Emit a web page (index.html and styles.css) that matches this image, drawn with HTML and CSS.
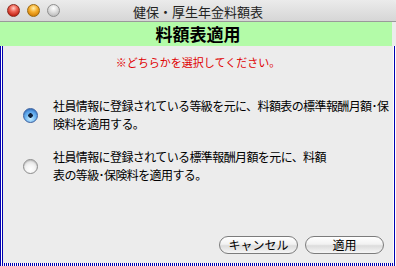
FILE: index.html
```html
<!DOCTYPE html>
<html lang="ja">
<head>
<meta charset="utf-8">
<link rel="stylesheet" href="styles.css">
</head>
<body>
<div class="window">
  <div class="titlebar">
    <div class="lights">
      <span class="light red"></span>
      <span class="light yellow"></span>
      <span class="light gray"></span>
    </div>
    <div class="title">健保・厚生年金料額表</div>
  </div>
  <div class="header">料額表適用</div>
  <div class="panel">
    <div class="inner">
      <div class="notice">※どちらかを選択してください。</div>
      <div class="options">
        <div class="option">
          <span class="radio on"></span>
          <div class="label">社員情報に登録されている等級を元に、料額表の標準報酬月額･保<br>険料を適用する。</div>
        </div>
        <div class="option">
          <span class="radio"></span>
          <div class="label">社員情報に登録されている標準報酬月額を元に、料額<br>表の等級･保険料を適用する。</div>
        </div>
      </div>
      <div class="buttons">
        <button class="btn">キャンセル</button>
        <button class="btn">適用</button>
      </div>
    </div>
  </div>
</div>
</body>
</html>
```
FILE: styles.css
```css
* { box-sizing: border-box; }
html, body {
  margin: 0;
  padding: 0;
  width: 396px;
  height: 266px;
  overflow: hidden;
  background: #ececec;
  font-family: "Noto Sans CJK JP", "Noto Sans", sans-serif;
}
.window {
  width: 396px;
  height: 266px;
  display: flex;
  flex-direction: column;
}
.titlebar {
  height: 22px;
  background: linear-gradient(#ebebeb, #d6d6d6);
  border-bottom: 1px solid #9a9a9a;
  border-radius: 5px 5px 0 0;
  display: flex;
  align-items: center;
}
.lights {
  display: flex;
  gap: 7px;
  padding-left: 7px;
}
.light {
  width: 13px;
  height: 13px;
  border-radius: 50%;
  display: block;
}
.light.red {
  background: radial-gradient(circle at 50% 30%, #ffd0c8 0, #f0685a 35%, #c01e10 80%);
  border: 1px solid #8a2a20;
}
.light.yellow {
  background: radial-gradient(circle at 50% 30%, #fff0b0 0, #f6b030 40%, #d07a00 85%);
  border: 1px solid #9a6a10;
}
.light.gray {
  background: radial-gradient(circle at 50% 30%, #ffffff 0, #dcdcdc 45%, #b4b4b4 90%);
  border: 1px solid #8e8e8e;
}
.title {
  flex: 1;
  text-align: center;
  font-size: 13px;
  color: #222;
  margin-left: -60px;
  padding-top: 1px;
}
.header {
  height: 24px;
  background: #b3fba8;
  margin-right: 4px;
  text-align: center;
  font-size: 17px;
  font-weight: bold;
  line-height: 24px;
  color: #000;
  padding-left: 4px;
}
.panel {
  flex: 1;
  padding: 0 3px 3px 3px;
  background:
    repeating-linear-gradient(90deg, #0000b0 0 1px, transparent 1px 2px) 0 0 / 2px 1px,
    #ffffff;
  display: flex;
}
.inner {
  flex: 1;
  background: #ececec;
  display: flex;
  flex-direction: column;
}
.notice {
  color: #e00000;
  font-size: 11px;
  text-align: center;
  padding-top: 8px;
  height: 30px;
}
.options {
  display: flex;
  flex-direction: column;
  gap: 15px;
  padding-left: 20px;
  padding-top: 21px;
}
.option {
  display: flex;
  align-items: center;
  gap: 15px;
}
.label {
  font-size: 12px;
  line-height: 18px;
  color: #000;
  letter-spacing: -0.6px;
  white-space: nowrap;
}
.radio {
  width: 15px;
  height: 15px;
  border-radius: 50%;
  display: block;
  flex: none;
  border: 1px solid #8c8c8c;
  background: radial-gradient(circle at 50% 70%, #ffffff 0, #f4f4f4 40%, #cfcfcf 100%);
  box-shadow: inset 0 1px 1px rgba(0,0,0,0.15);
}
.radio.on {
  border-color: #3a5f9e;
  background:
    radial-gradient(circle at 50% 50%, #10203a 0 2px, transparent 2.5px),
    radial-gradient(circle at 50% 75%, #c6ecff 0, #6cb4f0 45%, #2c72d0 100%);
}
.buttons {
  margin-top: auto;
  display: flex;
  justify-content: flex-end;
  gap: 7px;
  padding: 0 9px 9px 0;
}
.btn {
  width: 79px;
  height: 18px;
  border-radius: 9px;
  border: 1px solid #7c7c7c;
  background: linear-gradient(#ffffff, #f2f2f2 45%, #dcdcdc 55%, #f6f6f6);
  font-family: "Noto Sans CJK JP", "Noto Sans", sans-serif;
  font-size: 12px;
  color: #000;
  padding: 0;
  line-height: 16px;
}
```
